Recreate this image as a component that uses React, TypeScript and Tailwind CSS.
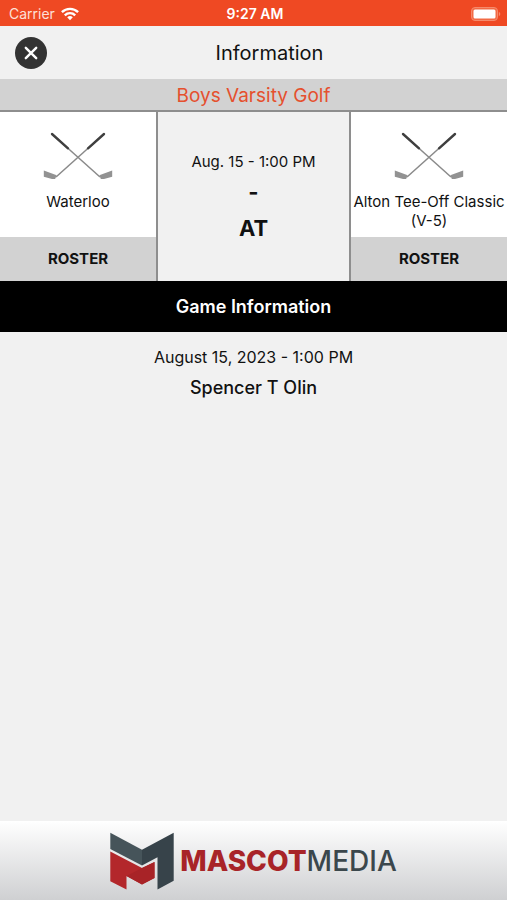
const game = {
  sport: 'Boys Varsity Golf',
  shortDate: 'Aug. 15 - 1:00 PM',
  score: '-',
  site: 'AT',
  date: 'August 15, 2023 - 1:00 PM',
  venue: 'Spencer T Olin',
  teams: ['Waterloo', 'Alton Tee-Off Classic (V-5)'],
}

function WifiIcon() {
  return (
    <svg viewBox="0 0 18 14" className="h-[14px] w-[18px]" fill="none" stroke="white" strokeWidth="2.4" aria-hidden="true">
      <path d="M0.9 5.2a11.6 11.6 0 0 1 16.2 0" />
      <path d="M3.8 8.3a7.4 7.4 0 0 1 10.4 0" />
      <path d="M6.2 10.3a4.1 4.1 0 0 1 5.6 0L9 13.2z" fill="white" stroke="none" />
    </svg>
  )
}

function BatteryIcon() {
  return (
    <svg viewBox="0 0 30 14" className="h-[14px] w-[30px]" aria-hidden="true">
      <rect x="0.5" y="0.5" width="26" height="13" rx="3.5" fill="#f26a45" stroke="#f58a6c" />
      <rect x="2.5" y="2.5" width="22" height="9" rx="1.5" fill="white" />
      <path d="M27.8 4.8c2 .8 2 3.6 0 4.4z" fill="#f58a6c" />
    </svg>
  )
}

function GolfClubs() {
  return (
    <svg viewBox="0 0 70 48" className="h-[48px] w-[70px]" fill="none" aria-hidden="true">
      <path d="M9 2L57 45" stroke="#8a8a8a" strokeWidth="1.5" />
      <path d="M61 2L13 45" stroke="#8a8a8a" strokeWidth="1.5" />
      <path d="M9 2L25 16.3" stroke="#3f3f3f" strokeWidth="2.4" strokeLinecap="round" />
      <path d="M61 2L45 16.3" stroke="#3f3f3f" strokeWidth="2.4" strokeLinecap="round" />
      <path d="M0.8 38.5L11 42.3l2.7 1.2-1.6 3.5H9L0.8 44.8z" fill="#929292" />
      <path d="M69.2 38.5L59 42.3l-2.7 1.2 1.6 3.5H61l8.2-2.2z" fill="#929292" />
    </svg>
  )
}

function MascotLogo() {
  return (
    <svg viewBox="0 0 64 58" className="h-[58px] w-[64px] shrink-0" aria-hidden="true">
      <path d="M0.3 0.7L32 17.8V33.6L0.3 17z" fill="#46545a" />
      <path d="M63.7 0.7L32 17.8V33.6L47.5 25.3V57.5L63.7 48.7z" fill="#37434a" />
      <path d="M0.3 19.5L32 36L44.5 30V46L32 52.5L16.5 44V57.5L0.3 49.2z" fill="#b3272b" />
      <path d="M32 36L44.5 30V46L32 52.5L16.5 44z" fill="#a82327" />
    </svg>
  )
}

function TeamPanel({ name }: { name: string }) {
  return (
    <div className="flex flex-col bg-white">
      <div className="flex flex-1 flex-col items-center pt-5 pb-1">
        <GolfClubs />
        <p className="mt-3 text-center text-[15px] leading-[19px]">{name}</p>
      </div>
      <button type="button" className="h-11 bg-[#d2d2d2] text-[15px] font-bold">
        ROSTER
      </button>
    </div>
  )
}

export default function App() {
  return (
    <div className="flex min-h-screen flex-col bg-[#f1f1f1] font-['Inter','Liberation_Sans',sans-serif] text-[#111]">
      <div className="grid h-[26px] grid-cols-3 items-center bg-[#ef4923] pt-px pr-[6px] pl-[9px] text-[14px] text-white">
        <div className="flex items-center gap-[6px]">
          <span className="text-[#fde0d8]">Carrier</span>
          <WifiIcon />
        </div>
        <span className="text-center font-semibold">9:27 AM</span>
        <div className="flex justify-end">
          <BatteryIcon />
        </div>
      </div>

      <header className="flex h-[53px] items-center px-[15px]">
        <button type="button" aria-label="Close" className="flex size-8 items-center justify-center rounded-full bg-[#333]">
          <svg viewBox="0 0 14 14" className="size-[14px]" stroke="white" strokeWidth="2.4" strokeLinecap="round" aria-hidden="true">
            <path d="M1.8 1.8l10.4 10.4M12.2 1.8L1.8 12.2" />
          </svg>
        </button>
        <h1 className="flex-1 text-center text-[20px]">Information</h1>
      </header>

      <h2 className="flex h-[33px] items-center justify-center border-b-2 border-[#8e8e8e] bg-[#d2d2d2] pt-[3px] text-[19px] text-[#e5502e]">
        {game.sport}
      </h2>

      <section className="grid min-h-[169px] grid-cols-[4fr_5fr_4fr]">
        <TeamPanel name={game.teams[0]} />
        <div className="flex flex-col items-center border-x-2 border-[#8e8e8e] pt-10 text-center">
          <p className="text-[15px] leading-5">{game.shortDate}</p>
          <p className="mt-1 text-[22px] leading-8 font-bold">{game.score}</p>
          <p className="text-[22px] leading-10 font-bold">{game.site}</p>
        </div>
        <TeamPanel name={game.teams[1]} />
      </section>

      <h2 className="flex h-[51px] items-center justify-center bg-black text-[18px] font-semibold text-white">
        Game Information
      </h2>

      <main className="flex-1 pt-3 text-center">
        <p className="text-[16px] leading-[26px]">{game.date}</p>
        <p className="mt-1 text-[18px] leading-7 font-medium">{game.venue}</p>
      </main>

      <footer className="flex h-[79px] items-center justify-center gap-[6px] bg-linear-to-b from-white to-[#cfd0d2]">
        <MascotLogo />
        <p className="text-[28px] leading-8 text-[#3b474c]">
          <span className="font-extrabold text-[#a82428]">MASCOT</span>
          <span className="font-medium">MEDIA</span>
        </p>
      </footer>
    </div>
  )
}
